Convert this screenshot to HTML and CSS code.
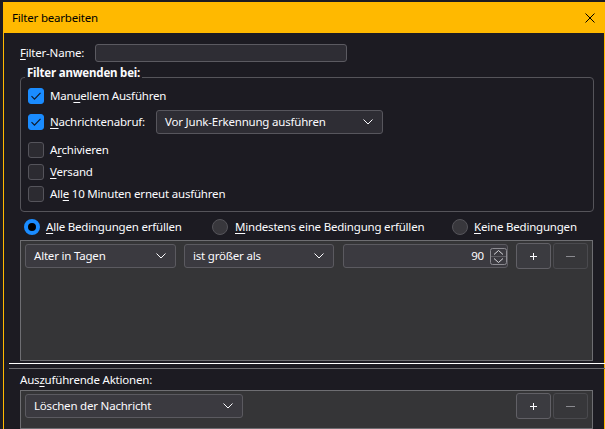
FILE: index.html
```html
<!DOCTYPE html>
<html lang="de">
<head>
<meta charset="utf-8">
<title>Filter bearbeiten</title>
<link rel="stylesheet" href="styles.css">
</head>
<body>
<div class="window">
  <div class="titlebar">
    <span class="title">Filter bearbeiten</span>
    <svg class="close" width="10" height="10" viewBox="0 0 10 10"><path d="M0.5 0.5L9.5 9.5M9.5 0.5L0.5 9.5" stroke="#000" stroke-width="1" fill="none"/></svg>
  </div>
  <div class="content">
    <div class="name-row">
      <span class="name-label"><u>F</u>ilter-Name:</span>
      <div class="text-input"></div>
    </div>
    <div class="group">
      <span class="legend">Filter anwenden bei:</span>
      <div class="check-row">
        <span class="cb checked"><svg width="16" height="16" viewBox="0 0 16 16"><path d="M3.5 8.2L6.5 11.2L12.5 4.8" stroke="#0f1a2a" stroke-width="1.2" fill="none"/></svg></span>
        <span>Man<u>u</u>ellem Ausführen</span>
      </div>
      <div class="check-row tall">
        <span class="cb checked"><svg width="16" height="16" viewBox="0 0 16 16"><path d="M3.5 8.2L6.5 11.2L12.5 4.8" stroke="#0f1a2a" stroke-width="1.2" fill="none"/></svg></span>
        <span class="fetch-label"><u>N</u>achrichtenabruf:</span>
        <div class="select dark junk">
          <span>Vor Junk-Erkennung ausführen</span>
          <svg width="10" height="6" viewBox="0 0 10 6"><path d="M0.5 0.5L5 5L9.5 0.5" stroke="#fbfbfe" stroke-width="1" fill="none"/></svg>
        </div>
      </div>
      <div class="check-row">
        <span class="cb"></span>
        <span>A<u>r</u>chivieren</span>
      </div>
      <div class="check-row">
        <span class="cb"></span>
        <span><u>V</u>ersand</span>
      </div>
      <div class="check-row">
        <span class="cb"></span>
        <span>All<u>e</u> 10 Minuten erneut ausführen</span>
      </div>
    </div>
    <div class="radio-row">
      <div class="radio-item"><span class="radio selected"></span><span><u>A</u>lle Bedingungen erfüllen</span></div>
      <div class="radio-item gap7"><span class="radio"></span><span><u>M</u>indestens eine Bedingung erfüllen</span></div>
      <div class="radio-item"><span class="radio"></span><span><u>K</u>eine Bedingungen</span></div>
    </div>
    <div class="listbox conditions">
      <div class="list-row">
        <div class="select cond1">
          <span>Alter in Tagen</span>
          <svg width="10" height="6" viewBox="0 0 10 6"><path d="M0.5 0.5L5 5L9.5 0.5" stroke="#fbfbfe" stroke-width="1" fill="none"/></svg>
        </div>
        <div class="select cond2">
          <span>ist größer als</span>
          <svg width="10" height="6" viewBox="0 0 10 6"><path d="M0.5 0.5L5 5L9.5 0.5" stroke="#fbfbfe" stroke-width="1" fill="none"/></svg>
        </div>
        <div class="number">
          <span>90</span>
          <svg class="spin" width="17" height="17" viewBox="0 0 17 17"><rect x="0.5" y="0.5" width="16" height="16" rx="2" stroke="#8d8c92" fill="none"/><path d="M1 8.5H16" stroke="#5d5c62"/><path d="M4 6.5L8.5 2.5L13 6.5M4 10.5L8.5 14.5L13 10.5" stroke="#d8d8dc" stroke-width="1" fill="none"/></svg>
        </div>
        <div class="btn add"><svg width="7" height="7" viewBox="0 0 7 7"><path d="M3.5 0V7M0 3.5H7" stroke="#fbfbfe" stroke-width="1"/></svg></div>
        <div class="btn remove disabled"><svg width="9" height="7" viewBox="0 0 9 7"><path d="M0 3.5H9" stroke="#8a8a8f" stroke-width="1"/></svg></div>
      </div>
    </div>
  </div>
  <div class="splitter"></div>
  <div class="content actions-area">
    <div class="actions-label">Aus<u>z</u>uführende Aktionen:</div>
    <div class="listbox actions">
      <div class="list-row">
        <div class="select action1">
          <span>Löschen der Nachricht</span>
          <svg width="10" height="6" viewBox="0 0 10 6"><path d="M0.5 0.5L5 5L9.5 0.5" stroke="#fbfbfe" stroke-width="1" fill="none"/></svg>
        </div>
        <div class="btn add push"><svg width="7" height="7" viewBox="0 0 7 7"><path d="M3.5 0V7M0 3.5H7" stroke="#fbfbfe" stroke-width="1"/></svg></div>
        <div class="btn remove disabled"><svg width="9" height="7" viewBox="0 0 9 7"><path d="M0 3.5H9" stroke="#8a8a8f" stroke-width="1"/></svg></div>
      </div>
    </div>
  </div>
</div>
</body>
</html>
```
FILE: styles.css
```css
* { box-sizing: border-box; }
html, body { margin: 0; padding: 0; }
body {
  width: 605px;
  height: 429px;
  overflow: hidden;
  background: #1c1b22;
  font-family: "Noto Sans", "Segoe UI", "Liberation Sans", sans-serif;
  font-size: 11.5px;
  letter-spacing: -0.2px;
  line-height: 16px;
  color: #fbfbfe;
}
u { text-decoration-thickness: 1px; text-underline-offset: 2px; }
svg { display: block; flex: none; }

.window {
  margin: 2px 0 0 3px;
  width: 602px;
  height: 427px;
  border-left: 1px solid #ffb900;
  border-right: 1px solid #ffb900;
  display: flex;
  flex-direction: column;
}
.titlebar {
  height: 31px;
  flex: none;
  background: #ffb900;
  color: #000;
  display: flex;
  align-items: center;
  justify-content: space-between;
  padding: 0 9px 0 8px;
}
.content { padding: 0 10px 0 16px; flex: none; }

.name-row { display: flex; align-items: center; height: 18px; margin-top: 11px; }
.name-label { width: 75px; flex: none; }
.text-input {
  width: 252px; height: 18px;
  background: #2e2d34;
  border: 1px solid #5b5a61;
  border-radius: 3px;
}

.group {
  position: relative;
  margin-top: 15px;
  border: 1px solid #55545a;
  border-radius: 4px;
  padding: 10px 0 9px 7px;
  display: flex;
  flex-direction: column;
  gap: 6px;
}
.legend {
  position: absolute;
  left: 4px;
  top: -13px;
  padding: 0 2px;
  background: #1c1b22;
  font-weight: bold;
}
.check-row { display: flex; align-items: center; height: 16px; }
.check-row.tall { height: 24px; margin-bottom: 2px; }
.cb {
  width: 16px; height: 16px; flex: none;
  margin-right: 6px;
  border-radius: 3px;
  background: #2c2b31;
  border: 1px solid #55545b;
}
.cb.checked { background: #1a8cff; border-color: #1a8cff; }
.cb.checked svg { margin: -1px; }
.fetch-label { width: 106px; flex: none; }

.select {
  height: 24px;
  display: flex;
  align-items: center;
  justify-content: space-between;
  padding: 0 9px 0 8px;
  background: #3b3a40;
  border: 1px solid #5b5a60;
  border-radius: 3px;
  flex: none;
}
.select.dark { background: #2e2d34; border-color: #57565d; }
.junk { width: 227px; }
.cond1 { width: 151px; margin-right: 8px; }
.cond2 { width: 150px; margin-right: 9px; }
.action1 { width: 218px; }

.radio-row {
  display: grid;
  grid-template-columns: 188px 240px auto;
  align-items: center;
  height: 16px;
  margin-top: 7px;
  padding-left: 4px;
}
.radio-item { display: flex; align-items: center; gap: 6px; white-space: nowrap; }
.radio-item.gap7 { gap: 7px; }
.radio {
  width: 16px; height: 16px; flex: none;
  border-radius: 50%;
  background: #38373c;
  border: 1px solid #55545a;
}
.radio.selected {
  background: #000;
  border: 4.5px solid #1a8cff;
}

.listbox {
  background: #353537;
  border: 1px solid #6e6e72;
  margin-right: 1px;
  padding: 2px 4px;
}
.conditions { margin-top: 5px; height: 121px; }
.list-row { display: flex; align-items: center; height: 26px; }

.number {
  width: 165px; height: 24px; flex: none;
  margin-right: 8px;
  display: flex;
  align-items: center;
  justify-content: flex-end;
  gap: 6px;
  padding-right: 0;
  background: #3b3a40;
  border: 1px solid #5b5a60;
  border-radius: 3px;
}
.btn {
  width: 35px; height: 26px; flex: none;
  display: flex;
  align-items: center;
  justify-content: center;
  background: #3b3b40;
  border: 1px solid #616066;
  border-radius: 3px;
}
.btn.add { margin-right: 2px; }
.btn.disabled { background: #37373a; border-color: #4a4a4e; }
.btn.push { margin-left: auto; }

.splitter {
  flex: none;
  margin: 2px -1px 0 5px;
  height: 6px;
  border-top: 1px solid #ffffff;
  border-bottom: 1px solid #6e6e72;
}
.actions-area { flex: 1; display: flex; flex-direction: column; }
.actions-label { margin-top: 3px; height: 16px; }
.actions { margin-top: 2px; flex: 1; }
```
